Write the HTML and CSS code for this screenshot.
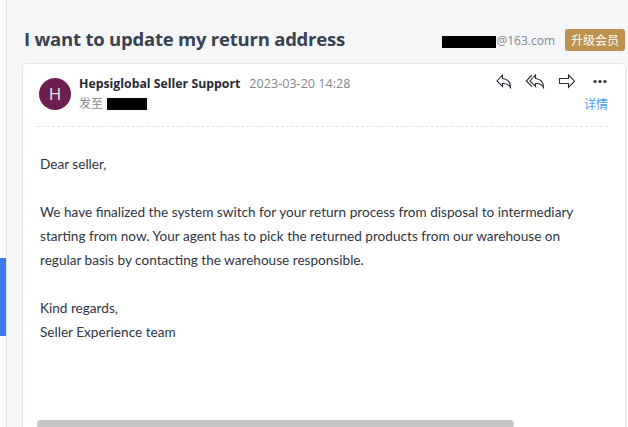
FILE: index.html
```html
<!DOCTYPE html>
<html lang="en">
  <head>
    <meta charset="UTF-8" />
    <meta name="viewport" content="width=device-width, initial-scale=1.0" />
    <title>I want to update my return address</title>
    <link rel="stylesheet" href="styles.css">
  </head>
  <body>
    <div class="app">
      <aside class="sidebar">
        <div class="sidebar-active"></div>
      </aside>
      <main class="reader">
        <header class="topbar">
          <h1 class="subject">I want to update my return address</h1>
          <div class="account">
            <span class="redacted redacted-account"></span>
            <span class="domain">@163.com</span>
            <button class="upgrade">升级会员</button>
          </div>
        </header>

        <section class="mail">
          <div class="mail-head">
            <div class="avatar">H</div>
            <div class="sender">
              <div class="sender-row">
                <strong class="name">Hepsiglobal Seller Support</strong>
                <time class="date">2023-03-20 14:28</time>
              </div>
              <div class="to-row">
                <span>发至</span>
                <span class="redacted redacted-to"></span>
              </div>
            </div>
            <div class="tools">
              <div class="icons">
                <svg class="icon" width="16" height="16" viewBox="0 0 16 16">
                  <path d="M6.500 1L1 7l5.500 5.500V9.500C10 9.200 12.800 10.500 14.500 13.500C14.500 8.500 11.500 5 6.500 4.500Z" />
                </svg>
                <svg class="icon icon-all" width="20" height="16" viewBox="0 0 20 16">
                  <path d="M10.500 1L5 7l5.500 5.500V9.500C14 9.200 16.800 10.500 18.500 13.500C18.500 8.500 15.500 5 10.500 4.500Z" />
                  <path d="M7 1L1.300 7L7 12.500" />
                </svg>
                <svg class="icon icon-forward" width="18" height="16" viewBox="0 0 18 16">
                  <path d="M1.500 4.500H10.500V1L16.500 7.200L10.500 13.400V9.500H1.500Z" />
                </svg>
                <svg class="icon-more" width="14" height="16" viewBox="0 0 14 16">
                  <circle cx="2" cy="7.500" r="1.600" />
                  <circle cx="7" cy="7.500" r="1.600" />
                  <circle cx="12" cy="7.500" r="1.600" />
                </svg>
              </div>
              <a class="details">详情</a>
            </div>
          </div>

          <div class="mail-body">
            <p>Dear seller,</p>
            <p>
              We have finalized the system switch for your return process from disposal to intermediary<br />
              starting from now. Your agent has to pick the returned products from our warehouse on<br />
              regular basis by contacting the warehouse responsible.
            </p>
            <p>
              Kind regards,<br />
              Seller Experience team
            </p>
          </div>

          <div class="scrollbar"></div>
        </section>
      </main>
    </div>
  </body>
</html>
```

FILE: styles.css
```css
* {
  margin: 0;
  padding: 0;
  box-sizing: border-box;
}

body {
  font-family: "Open Sans", "Noto Sans CJK SC", sans-serif;
  background-color: #f4f6f8;
}

.app {
  display: flex;
  height: 427px;
  overflow: hidden;
}

/* edge of the folder list */
.sidebar {
  width: 7px;
  padding-top: 258px;
  background-color: #fff;
  border-right: 1px solid #e2e4e6;
}

.sidebar-active {
  height: 78px;
  background-color: #3d7bee;
}

.reader {
  display: flex;
  flex-direction: column;
  width: 621px;
  padding: 15px 2px 0 15px;
}

.topbar {
  display: flex;
  justify-content: space-between;
  align-items: center;
  height: 48px;
  padding: 2px 1px 0 2px;
}

.subject {
  padding-bottom: 4px;
  font-size: 18.5px;
  font-weight: 700;
  letter-spacing: -0.22px;
  color: #3a414f;
  white-space: nowrap;
}

.account {
  display: flex;
  align-items: center;
}

.redacted {
  background-color: #000;
  height: 12px;
}

.redacted-account {
  width: 54px;
  margin-top: 3px;
}

.domain {
  font-size: 12px;
  color: #84878c;
}

.upgrade {
  width: 60px;
  height: 22px;
  margin-left: 10px;
  border: none;
  border-radius: 3px;
  background-color: #bd924f;
  color: #fff;
  font: 12px/20px "Noto Sans CJK SC", sans-serif;
}

.mail {
  display: flex;
  flex-direction: column;
  flex: 1;
  padding: 0 17px 0 14px;
  background-color: #fff;
  border: 1px solid #e3e5e8;
  border-bottom: none;
  border-radius: 5px 5px 0 0;
}

.mail-head {
  display: flex;
  height: 63px;
  padding: 10px 0 0 2px;
  border-bottom: 1px dashed #e2e2e2;
}

.avatar {
  width: 32px;
  height: 32px;
  margin-top: 4px;
  border-radius: 50%;
  background-color: #6d1f52;
  color: #f2e6ee;
  font-size: 17px;
  line-height: 32px;
  text-align: center;
}

.sender {
  margin-left: 8px;
}

.sender-row {
  display: flex;
  height: 20px;
  line-height: 20px;
  white-space: nowrap;
}

.name {
  font-size: 12.3px;
  color: #262a33;
}

.date {
  margin-left: 9px;
  font-size: 12.6px;
  color: #85888d;
}

.to-row {
  display: flex;
  align-items: center;
  gap: 4px;
  height: 20px;
  font-size: 12px;
  line-height: 20px;
  color: #85888d;
}

.redacted-to {
  width: 40px;
}

.tools {
  display: flex;
  flex-direction: column;
  align-items: flex-end;
  margin-left: auto;
}

.icons {
  display: flex;
  height: 20px;
  padding-right: 1px;
}

.icon {
  fill: none;
  stroke: #2b2e38;
  stroke-width: 1.1;
}

.icon-all {
  margin-left: 13px;
}

.icon-forward {
  margin-left: 13px;
}

.icon-more {
  margin-left: 17px;
  fill: #2b2e38;
}

.details {
  font-size: 12px;
  line-height: 22px;
  color: #4a98ff;
}

.mail-body {
  padding: 25px 0 0 3px;
  font-family: Lato, sans-serif;
  font-size: 13.6px;
  line-height: 24px;
  color: #2f3542;
  white-space: nowrap;
}

.mail-body p {
  margin-bottom: 24px;
}

.scrollbar {
  width: 477px;
  height: 8px;
  margin-top: auto;
  margin-bottom: -1px;
  border-radius: 4px;
  background-color: #c4c5c7;
}
```
